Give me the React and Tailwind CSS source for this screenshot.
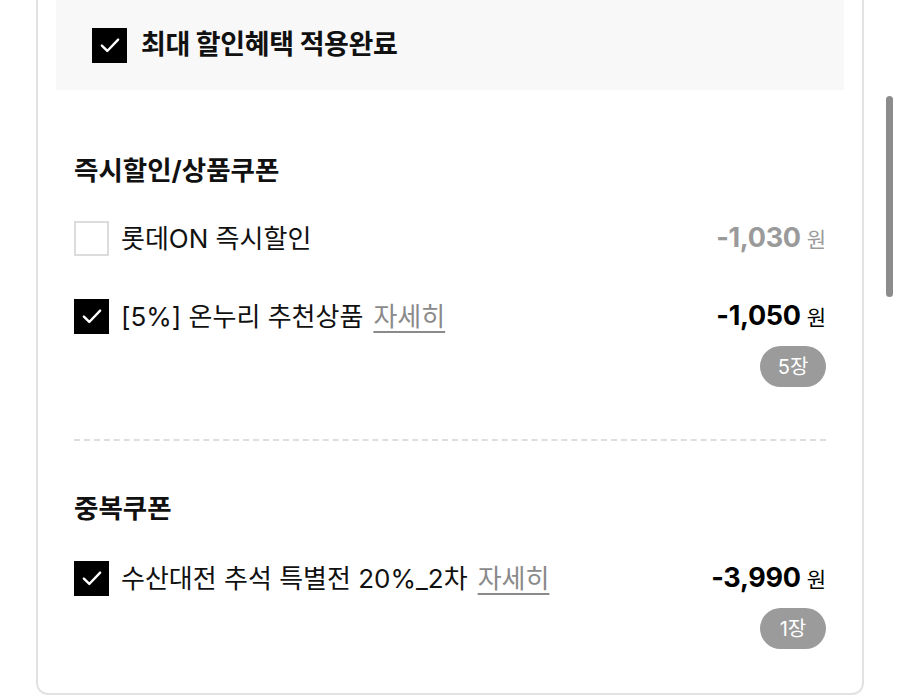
const KR = "font-['Inter','Noto_Sans_CJK_KR',sans-serif]";

const Check = ({ checked }) =>
  checked ? (
    <span className="flex h-[35px] w-[35px] shrink-0 items-center justify-center bg-black">
      <svg width="26" height="26" viewBox="0 0 24 24" fill="none">
        <path d="M4.5 12.5l5 5L19.5 7" stroke="#fff" strokeWidth="2.2" strokeLinecap="round" strokeLinejoin="round" />
      </svg>
    </span>
  ) : (
    <span className="h-[35px] w-[35px] shrink-0 border-2 border-[#dcdcdc] bg-white" />
  );

const Amount = ({ value, muted }) => (
  <div className={`flex items-baseline gap-[6px] ${muted ? "text-[#9a9a9a]" : "text-black"}`}>
    <span className="text-[27px] font-bold tracking-[-0.3px]">{value}</span>
    <span className="text-[21px]">원</span>
  </div>
);

const Row = ({ checked, label, detail, value, muted, count }) => (
  <div>
    <div className="flex h-[36px] items-center justify-between">
      <div className="flex items-center gap-[12px]">
        <Check checked={checked} />
        <span className="text-[26px] text-[#111]">
          {label}
          {detail && (
            <span className="ml-[10px] text-[#8a8a8a] underline decoration-[1.5px] underline-offset-[5px]">
              자세히
            </span>
          )}
        </span>
      </div>
      <Amount value={value} muted={muted} />
    </div>
    {count && (
      <div className="mt-[12px] flex justify-end">
        <span className="flex h-[41px] w-[66px] items-center justify-center rounded-full bg-[#9b9b9b] text-[20px] text-white">
          {count}
        </span>
      </div>
    )}
  </div>
);

export default function App() {
  return (
    <div className={`relative h-[697px] w-[900px] overflow-hidden bg-white ${KR}`}>
      <div className="ml-[36px] w-[828px] rounded-b-[12px] border-x-2 border-b-2 border-[#e2e2e2] px-[18px] pb-[44px]">
        <div className="flex h-[90px] items-center gap-[14px] bg-[#f8f8f8] px-[36px]">
          <Check checked />
          <span className="text-[27px] font-bold tracking-[-0.4px] text-[#111]">최대 할인혜택 적용완료</span>
        </div>

        <div className="px-[18px]">
          <h2 className="mt-[63px] flex h-[36px] items-center text-[26.5px] font-bold text-[#111]">
            즉시할인/상품쿠폰
          </h2>
          <div className="mt-[31px]">
            <Row label="롯데ON 즉시할인" value="-1,030" muted />
          </div>
          <div className="mt-[42px]">
            <Row checked label="[5%] 온누리 추천상품" detail value="-1,050" count="5장" />
          </div>

          <div className="mt-[52px] border-t-2 border-dashed border-[#dedede]" />

          <h2 className="mt-[50px] flex h-[36px] items-center text-[26.5px] font-bold text-[#111]">
            중복쿠폰
          </h2>
          <div className="mt-[33px]">
            <Row checked label="수산대전 추석 특별전 20%_2차" detail value="-3,990" count="1장" />
          </div>
        </div>
      </div>

      <div className="absolute left-[886px] top-[96px] h-[201px] w-[7px] rounded-full bg-[#8c8c8c]" />
    </div>
  );
}
